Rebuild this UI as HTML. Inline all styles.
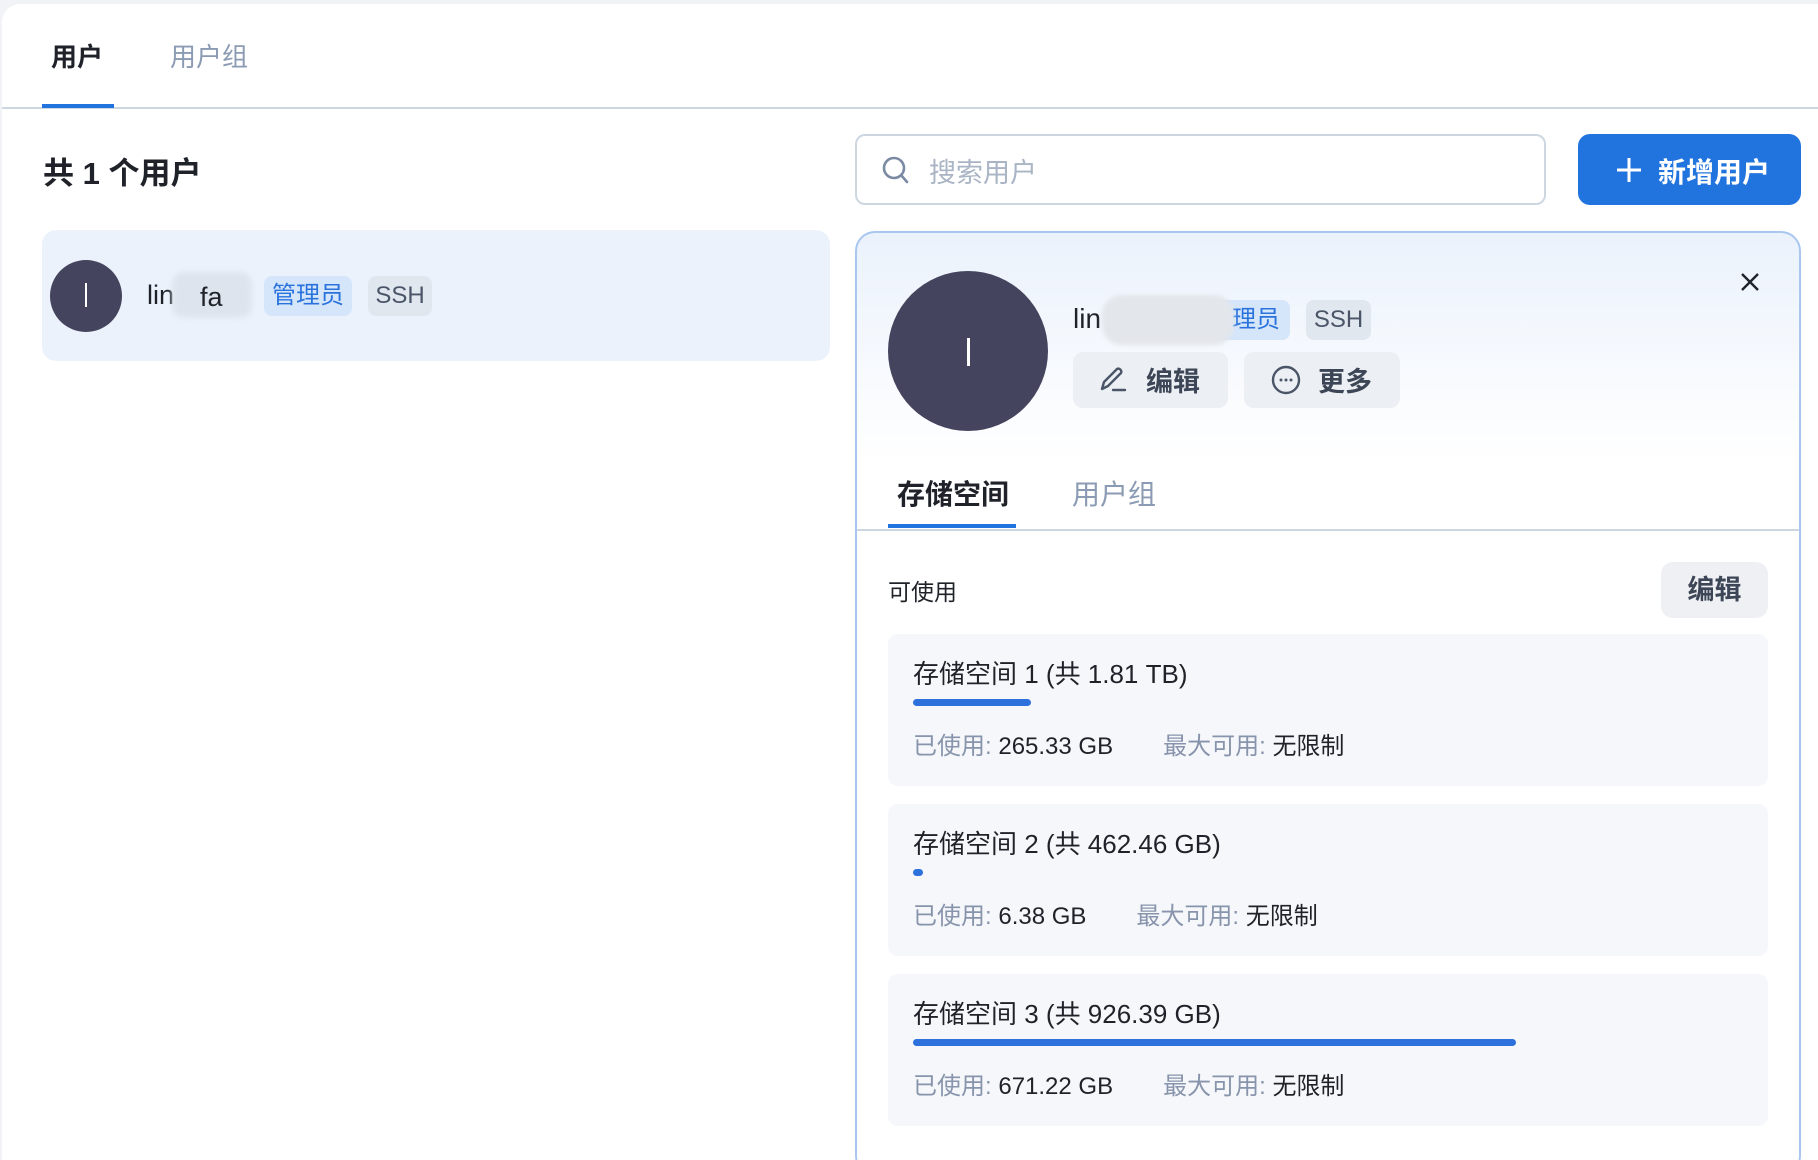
<!DOCTYPE html>
<html style="overflow:hidden;width:1818px;height:1160px"><head><meta charset="utf-8"><style>
*{box-sizing:border-box;margin:0;padding:0}
body{width:1818px;height:1160px;overflow:hidden;background:#f1f3f6;font-family:"Liberation Sans","Noto Sans CJK SC",sans-serif;color:#1f2329;position:relative}
.a{position:absolute;white-space:nowrap}
.card{position:absolute;left:2px;top:4px;width:1816px;height:1156px;background:#fff;border-radius:18px 0 0 0}
.tag{position:absolute;border-radius:8px;font-size:24px;line-height:40px;text-align:center}
.sc{position:absolute;left:888px;width:880px;height:152px;background:#f5f7fb;border-radius:10px}
.sc .t{position:absolute;left:25px;top:20px;font-size:26px;color:#1f2329}
.sc .b{position:absolute;left:25px;top:65px;height:7px;border-radius:4px;background:#2d72dc}
.sc .u{position:absolute;left:25px;top:92px;font-size:24px;color:#1f2329}
.g{color:#8794ab}
</style></head><body>
<div class="card"></div>
<div class="a" style="left:51px;top:37px;font-size:26px;font-weight:bold;color:#1f2329">用户</div>
<div class="a" style="left:170px;top:37px;font-size:26px;color:#8a9bb3">用户组</div>
<div class="a" style="left:2px;top:107px;width:1816px;height:2px;background:#cdd7e2"></div>
<div class="a" style="left:42px;top:104px;width:72px;height:4px;background:#2173de"></div>

<div class="a" style="left:43px;top:148px;font-size:31px;font-weight:bold">共 1 个用户</div>

<div class="a" style="left:42px;top:230px;width:788px;height:131px;background:#ecf2fb;border-radius:14px"></div>
<div class="a" style="left:50px;top:260px;width:72px;height:72px;border-radius:50%;background:#45445e"></div>
<div class="a" style="left:85px;top:283px;width:2px;height:24px;background:#fff"></div>
<div class="a" style="left:147px;top:280px;font-size:27px;color:#1f2329">lin</div>
<div class="a" style="left:172px;top:272px;width:80px;height:46px;background:#dde3ec;border-radius:12px;filter:blur(3px);opacity:.9"></div>
<div class="a" style="left:200px;top:282px;font-size:27px;color:#1f2329">fa</div>
<div class="tag" style="left:264px;top:276px;width:88px;background:#d5e5fa;color:#2a73dd">管理员</div>
<div class="tag" style="left:368px;top:276px;width:64px;background:#e1e7ef;color:#4a5568">SSH</div>

<div class="a" style="left:855px;top:134px;width:691px;height:71px;border:2px solid #cdd7e2;border-radius:10px;background:#fff"></div>
<svg class="a" style="left:881px;top:154px" width="30" height="32" viewBox="0 0 30 32"><circle cx="13" cy="14" r="10" fill="none" stroke="#7a8aa3" stroke-width="2.6"/><path d="M20 21l6 7" stroke="#7a8aa3" stroke-width="2.6" stroke-linecap="round"/></svg>
<div class="a" style="left:929px;top:151px;font-size:27px;color:#a9b4c4">搜索用户</div>

<div class="a" style="left:1578px;top:134px;width:223px;height:71px;background:#2173de;border-radius:12px"></div>
<svg class="a" style="left:1616px;top:157px" width="26" height="26"><path d="M13 1v24M1 13h24" stroke="#fff" stroke-width="3"/></svg>
<div class="a" style="left:1658px;top:151px;font-size:28px;font-weight:bold;color:#fff">新增用户</div>

<div class="a" style="left:855px;top:231px;width:946px;height:945px;border:2px solid #a9c7ef;border-radius:20px;background:linear-gradient(#ebf2fc 0px,#ffffff 230px,#fff 100%);overflow:hidden">
 <div style="position:absolute;left:0;top:296px;width:100%;height:2px;background:#cdd7e2"></div>
 <div style="position:absolute;left:31px;top:291px;width:128px;height:4px;background:#2173de"></div>
</div>
<div class="a" style="left:888px;top:271px;width:160px;height:160px;border-radius:50%;background:#45445e"></div>
<div class="a" style="left:967px;top:338px;width:3px;height:28px;background:#fff"></div>
<svg class="a" style="left:1740px;top:272px" width="20" height="20"><path d="M2 2l16 16M18 2L2 18" stroke="#1f2329" stroke-width="2.4"/></svg>
<div class="a" style="left:1073px;top:303px;font-size:28px;color:#1f2329">lin</div>
<div class="tag" style="left:1200px;top:300px;width:90px;height:40px;background:#d5e5fa;color:#2a73dd;text-align:right;padding-right:10px">理员</div>
<div class="a" style="left:1102px;top:295px;width:132px;height:50px;background:#e3e6eb;border-radius:20px;filter:blur(2px)"></div>
<div class="tag" style="left:1306px;top:300px;width:65px;background:#e1e7ef;color:#4a5568">SSH</div>
<div class="a" style="left:1073px;top:352px;width:155px;height:56px;background:#eceff3;border-radius:10px"></div>
<svg class="a" style="left:1099px;top:365px" width="30" height="28" viewBox="0 0 30 28"><path d="M3 24l2-7L18 4a3 3 0 014 4L9 21z" fill="none" stroke="#4a5568" stroke-width="2.4" stroke-linejoin="round"/><path d="M14 25h12" stroke="#4a5568" stroke-width="2.4" stroke-linecap="round"/></svg>
<div class="a" style="left:1146px;top:360px;font-size:27px;font-weight:bold;color:#3c4656">编辑</div>
<div class="a" style="left:1244px;top:352px;width:156px;height:56px;background:#eceff3;border-radius:10px"></div>
<svg class="a" style="left:1271px;top:365px" width="30" height="30"><circle cx="15" cy="15" r="13" fill="none" stroke="#4a5568" stroke-width="2.4"/><circle cx="10" cy="15" r="1.5" fill="#4a5568"/><circle cx="15" cy="15" r="1.5" fill="#4a5568"/><circle cx="20" cy="15" r="1.5" fill="#4a5568"/></svg>
<div class="a" style="left:1318px;top:360px;font-size:27px;font-weight:bold;color:#3c4656">更多</div>

<div class="a" style="left:897px;top:473px;font-size:28px;font-weight:bold">存储空间</div>
<div class="a" style="left:1072px;top:473px;font-size:28px;color:#8a9bb3">用户组</div>

<div class="a" style="left:888px;top:573px;font-size:23px">可使用</div>
<div class="a" style="left:1661px;top:562px;width:107px;height:56px;background:#eef0f3;border-radius:12px;font-size:27px;font-weight:bold;color:#3c4656;text-align:center;line-height:56px">编辑</div>

<div class="sc" style="top:634px"><div class="t">存储空间 1 (共 1.81 TB)</div><div class="b" style="width:118px"></div><div class="u"><span class="g">已使用: </span>265.33 GB<span class="g" style="margin-left:50px">最大可用: </span>无限制</div></div>
<div class="sc" style="top:804px"><div class="t">存储空间 2 (共 462.46 GB)</div><div class="b" style="width:10px"></div><div class="u"><span class="g">已使用: </span>6.38 GB<span class="g" style="margin-left:50px">最大可用: </span>无限制</div></div>
<div class="sc" style="top:974px"><div class="t">存储空间 3 (共 926.39 GB)</div><div class="b" style="width:603px"></div><div class="u"><span class="g">已使用: </span>671.22 GB<span class="g" style="margin-left:50px">最大可用: </span>无限制</div></div>
</body></html>
